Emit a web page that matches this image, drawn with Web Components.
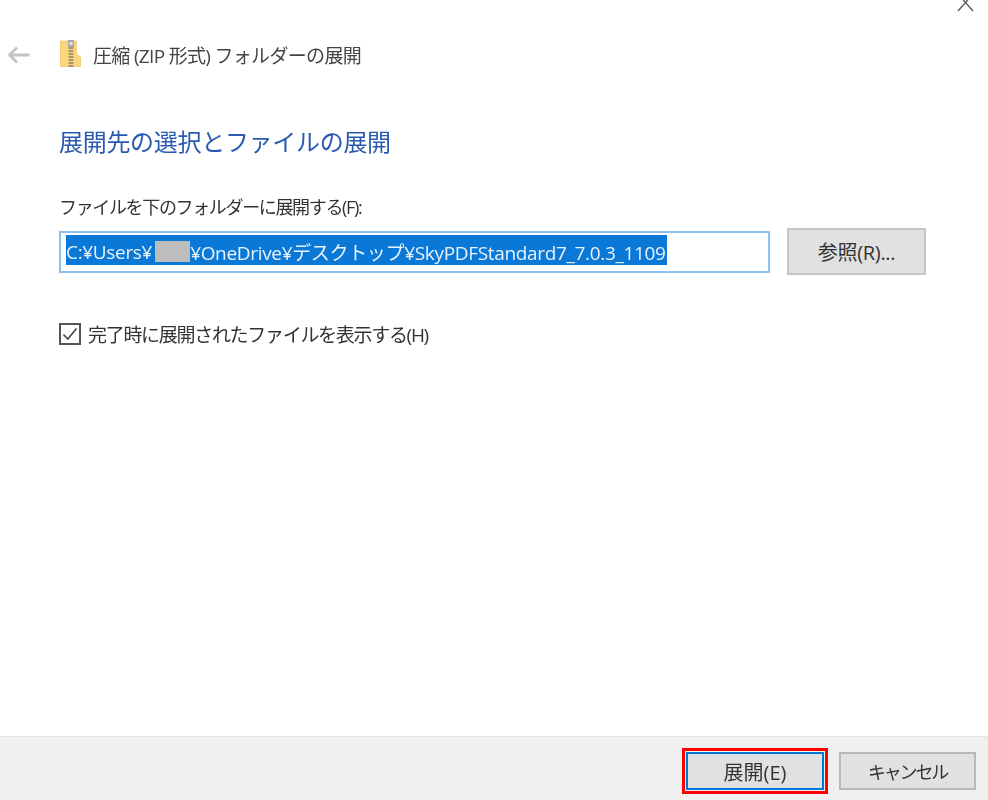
<!DOCTYPE html>
<html lang="ja">
<head>
<meta charset="utf-8">
<title>圧縮 (ZIP 形式) フォルダーの展開</title>
<style>
html, body { margin: 0; height: 100%; background: #fff; }
body { font-family: "Open Sans", "Noto Sans CJK JP", sans-serif; color: #333; overflow: hidden; }
</style>
</head>
<body>
<extract-wizard>
  <wizard-title slot="title">圧縮 (ZIP 形式) フォルダーの展開</wizard-title>
  <h-text slot="heading">展開先の選択とファイルの展開</h-text>
  <path-field slot="path" label="ファイルを下のフォルダーに展開する(F):"></path-field>
  <check-row slot="check">完了時に展開されたファイルを表示する(H)</check-row>
  <win-button slot="footer" default marked>展開(E)</win-button>
  <win-button slot="footer" style="--btn-spacing: -2.2px; --btn-size: 18px">キャンセル</win-button>
</extract-wizard>

<script>
const FONT = '"Open Sans", "Noto Sans CJK JP", sans-serif';

class extractWizard extends HTMLElement {
    constructor() {
        super();
        this.attachShadow({ mode: 'open' });
    }
    connectedCallback() {
        this.shadowRoot.innerHTML = `
            <style>
            :host { display: flex; flex-direction: column; width: 988px; height: 800px; overflow: hidden; filter: blur(.3px); }
            .close { height: 12px; display: flex; justify-content: flex-end; padding-right: 12px; }
            .close svg { display: block; }
            main { flex: 1; display: flex; flex-direction: column; padding-left: 59px; padding-right: 62px; }
            .heading { margin-top: 41px; }
            .path { margin-top: 36px; }
            .check { margin-top: 45px; }
            footer {
                height: 64px; box-sizing: border-box; background: #f0f0f0; border-top: 1px solid #e4e4e4;
                display: flex; justify-content: flex-end; align-items: flex-start;
                gap: 15px; padding: 15px 12px 0 0;
            }
            </style>
            <div class="close">
                <svg width="22" height="12" viewBox="0 0 22 12"><path d="M4 -6L19 11M19 -6L4 11" stroke="#555" stroke-width="1.3" fill="none"/></svg>
            </div>
            <slot name="title"></slot>
            <main>
                <div class="heading"><slot name="heading"></slot></div>
                <div class="path"><slot name="path"></slot></div>
                <div class="check"><slot name="check"></slot></div>
            </main>
            <footer><slot name="footer"></slot></footer>
        `;
    }
}
customElements.define("extract-wizard", extractWizard);

class wizardTitle extends HTMLElement {
    constructor() {
        super();
        this.attachShadow({ mode: 'open' });
    }
    connectedCallback() {
        this.shadowRoot.innerHTML = `
            <style>
            :host { display: flex; align-items: center; height: 52px; padding-left: 7px; margin-top: 20px; font: 19px ${FONT}; color: #444; }
            .back { margin-right: 30px; display: block; margin-top: -6px; }
            .zip { margin-right: 12px; display: block; margin-top: -9px; }
            span { letter-spacing: -0.68px; white-space: nowrap; position: relative; top: -3px; }
            </style>
            <svg class="back" width="23" height="18" viewBox="0 0 23 18"><path d="M10 1.5L2.5 9L10 16.5M2.5 9H22.5" stroke="#c4c4c4" stroke-width="2.8" fill="none"/></svg>
            <svg class="zip" width="21" height="27" viewBox="0 0 21 27">
                <path d="M0 1H16.5V14L20.5 17V26.5H0Z" fill="#fbd67f" stroke="#eec36a" stroke-width=".7"/>
                <rect x="8" y="0" width="6" height="7" fill="#a9a9a9"/>
                <rect x="9.5" y="2" width="3" height="3" fill="#e8e8e8"/>
                <path d="M8.5 8H13.5M8.5 11H13.5M8.5 14H13.5M8.5 17H13.5M8.5 20H13.5M8.5 23H13.5M8.5 26H13.5" stroke="#8c8065" stroke-width="1.5"/>
            </svg>
            <span><slot></slot></span>
        `;
    }
}
customElements.define("wizard-title", wizardTitle);

class hText extends HTMLElement {
    constructor() {
        super();
        this.attachShadow({ mode: 'open' });
    }
    connectedCallback() {
        this.shadowRoot.innerHTML = `
            <style>
            :host { display: block; font: 24px/34px ${FONT}; color: #2a5ab0; letter-spacing: -0.3px; white-space: nowrap; }
            </style>
            <slot></slot>
        `;
    }
}
customElements.define("h-text", hText);

class pathField extends HTMLElement {
    constructor() {
        super();
        this.attachShadow({ mode: 'open' });
    }
    connectedCallback() {
        const label = this.getAttribute('label');
        this.shadowRoot.innerHTML = `
            <style>
            :host { display: block; font: 18px ${FONT}; color: #333; }
            .label { line-height: 24px; letter-spacing: -1.35px; white-space: nowrap; }
            .row { display: flex; align-items: center; gap: 17px; margin-top: 9px; }
            .input {
                width: 711px; height: 42px; box-sizing: border-box; border: 2px solid #8cc0ee;
                background: #fff; padding: 2px 5px 6px; display: flex; align-items: stretch;
            }
            .sel { width: 601px; box-sizing: border-box; padding-top: 4px; background: #0a78d7; color: #e8f2fb; display: flex; align-items: center; white-space: nowrap; letter-spacing: -0.33px; font-size: 19px; overflow: hidden; }
            .mask { display: inline-block; width: 35px; height: 21px; background: #bdbdbd; margin-left: 3px; }
            </style>
            <div class="label">${label}</div>
            <div class="row">
                <div class="input">
                    <div class="sel">C:¥Users¥<span class="mask"></span>¥OneDrive¥デスクトップ¥SkyPDFStandard7_7.0.3_1109</div>
                </div>
                <win-button wide style="--btn-spacing: -0.3px">参照(R)...</win-button>
            </div>
        `;
    }
}
customElements.define("path-field", pathField);

class checkRow extends HTMLElement {
    constructor() {
        super();
        this.attachShadow({ mode: 'open' });
    }
    connectedCallback() {
        this.shadowRoot.innerHTML = `
            <style>
            :host { display: flex; align-items: center; gap: 7px; font: 19px ${FONT}; color: #333; letter-spacing: -1.3px; white-space: nowrap; }
            svg { display: block; flex: none; }
            </style>
            <svg width="22" height="22" viewBox="0 0 22 22">
                <rect x="1" y="1" width="20" height="20" fill="#fff" stroke="#555" stroke-width="2"/>
                <path d="M4.5 11.5L8.8 16L17.5 5.5" stroke="#444" stroke-width="1.6" fill="none"/>
            </svg>
            <span><slot></slot></span>
        `;
    }
}
customElements.define("check-row", checkRow);

class winButton extends HTMLElement {
    constructor() {
        super();
        this.attachShadow({ mode: 'open' });
    }
    connectedCallback() {
        this.shadowRoot.innerHTML = `
            <style>
            :host { display: block; flex: none; width: 137px; height: 38px; box-sizing: border-box; background: #e1e1e1; border: 2px solid #b8b8b8; font: var(--btn-size, 20px) ${FONT}; color: #333; }
            :host([wide]) { width: 139px; height: 47px; border-color: #c6c6c6; }
            :host([default]) { border-color: #0078d7; width: 138px; }
            :host([marked]) { outline: 3px solid #f00; outline-offset: 1px; }
            div { height: 100%; display: flex; align-items: center; justify-content: center; letter-spacing: var(--btn-spacing, 0); white-space: nowrap; }
            </style>
            <div><slot></slot></div>
        `;
    }
}
customElements.define("win-button", winButton);
</script>
</body>
</html>
